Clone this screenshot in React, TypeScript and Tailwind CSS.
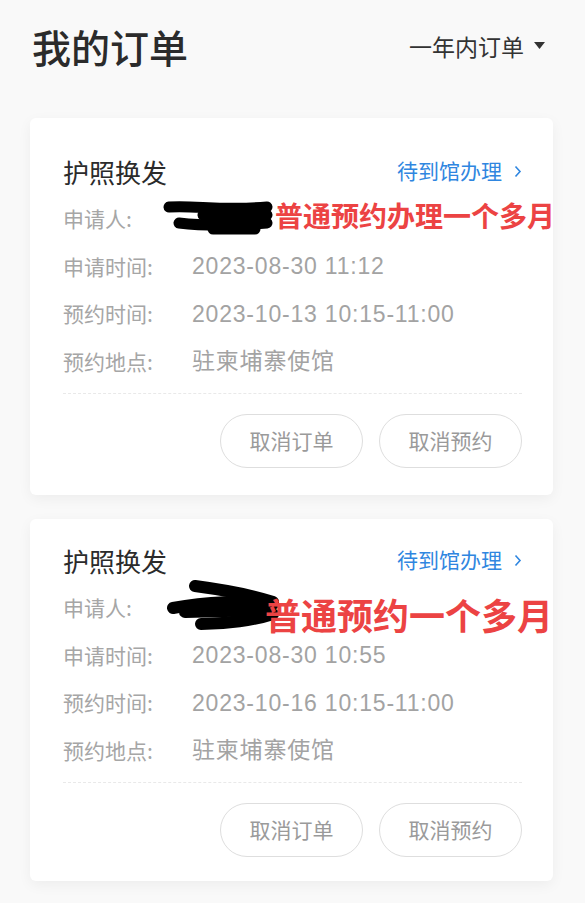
import React from "react";

const font = { fontFamily: '"Noto Sans CJK SC", "Noto Sans", sans-serif' };
const valueFont = { fontFamily: '"Liberation Sans", "Noto Sans CJK SC", sans-serif' };

type Order = {
  id: string;
  applyTime: string;
  bookTime: string;
  place: string;
  note: string;
};

const orders: Order[] = [
  {
    id: "1",
    applyTime: "2023-08-30 11:12",
    bookTime: "2023-10-13 10:15-11:00",
    place: "驻柬埔寨使馆",
    note: "普通预约办理一个多月",
  },
  {
    id: "2",
    applyTime: "2023-08-30 10:55",
    bookTime: "2023-10-16 10:15-11:00",
    place: "驻柬埔寨使馆",
    note: "普通预约一个多月",
  },
];

// marker scribble over the applicant name
const ScribbleA = () => (
  <svg width="112" height="40" viewBox="0 0 112 40" className="absolute left-[100px] top-[2px]">
    <g stroke="#000" strokeWidth="11" strokeLinecap="round" fill="none">
      <path d="M6 10 C30 8 60 14 104 10" />
      <path d="M40 18 C60 16 80 20 104 18" />
      <path d="M16 26 C50 30 80 28 104 26" />
      <path d="M50 32 L92 32" />
    </g>
  </svg>
);

const ScribbleB = () => (
  <svg width="116" height="56" viewBox="0 0 116 56" className="absolute left-[102px] top-[-6px]">
    <g stroke="#000" strokeWidth="12" strokeLinecap="round" fill="none">
      <path d="M30 8 C60 12 90 18 108 24" />
      <path d="M8 30 C40 24 80 22 108 26" />
      <path d="M36 46 C60 46 90 42 108 36" />
      <path d="M20 34 L100 32" />
    </g>
  </svg>
);

const Row = ({ label, value, children }: { label: string; value?: string; children?: React.ReactNode }) => (
  <div className="relative flex h-[47.5px] items-center text-[21px] text-[#a6a6a6]">
    <span className="w-[129px] shrink-0">{label}</span>
    <span className="text-[23px] tracking-[0.8px] text-[#a3a3a3]" style={valueFont}>
      {value}
    </span>
    {children}
  </div>
);

const OrderCard = ({ order, index }: { order: Order; index: number }) => (
  <div
    className={`rounded-[6px] bg-white pl-[33px] pr-[31px] shadow-[0_4px_14px_rgba(0,0,0,0.05)] ${
      index === 0 ? "pt-[29px] pb-[27px]" : "pt-[17px] pb-[24px]"
    }`}
  >
    <div className="flex h-[48px] items-center justify-between">
      <span className="text-[26px] text-[#2b2b2b]">护照换发</span>
      <span className="flex items-center gap-[12px] text-[21px] text-[#2f86e0]">
        待到馆办理
        <svg width="8" height="13" viewBox="0 0 8 13">
          <path d="M1.5 1.5 L6 6.5 L1.5 11.5" stroke="#2f86e0" strokeWidth="1.6" fill="none" />
        </svg>
      </span>
    </div>
    <Row label="申请人:">
      {index === 0 ? <ScribbleA /> : <ScribbleB />}
      <span
        className={`absolute whitespace-nowrap font-bold text-[#ec4343] ${
          index === 0
            ? "left-[212px] top-[3px] text-[28px] leading-[34px]"
            : "left-[202px] top-[8px] text-[36px] leading-[44px]"
        }`}
      >
        {order.note}
      </span>
    </Row>
    <Row label="申请时间:" value={order.applyTime} />
    <Row label="预约时间:" value={order.bookTime} />
    <Row label="预约地点:" value={order.place} />
    <div className="mt-[8px] border-t border-dashed border-[#e9e9e9]" />
    <div className="mt-[20px] flex justify-end gap-[16px]">
      <button className="h-[54px] w-[143px] rounded-full border border-[#dedede] text-[21px] text-[#9a9a9a]">
        取消订单
      </button>
      <button className="h-[54px] w-[143px] rounded-full border border-[#dedede] text-[21px] text-[#9a9a9a]">
        取消预约
      </button>
    </div>
  </div>
);

export default function App() {
  return (
    <div className="min-h-[903px] w-[585px] overflow-hidden bg-[#f9f9f9]" style={font}>
      <div className="flex h-[92px] items-center justify-between pl-[32px] pr-[40px]">
        <h1 className="text-[39px] font-medium text-[#2b2b2b]">我的订单</h1>
        <div className="flex items-center gap-[10px] text-[23px] text-[#333]">
          一年内订单
          <svg width="11" height="8" viewBox="0 0 11 8">
            <path d="M0 0 H11 L5.5 7 Z" fill="#333" />
          </svg>
        </div>
      </div>
      <div className="mt-[26px] flex flex-col gap-[24px] pl-[30px] pr-[32px]">
        {orders.map((o, i) => (
          <OrderCard key={o.id} order={o} index={i} />
        ))}
      </div>
    </div>
  );
}
